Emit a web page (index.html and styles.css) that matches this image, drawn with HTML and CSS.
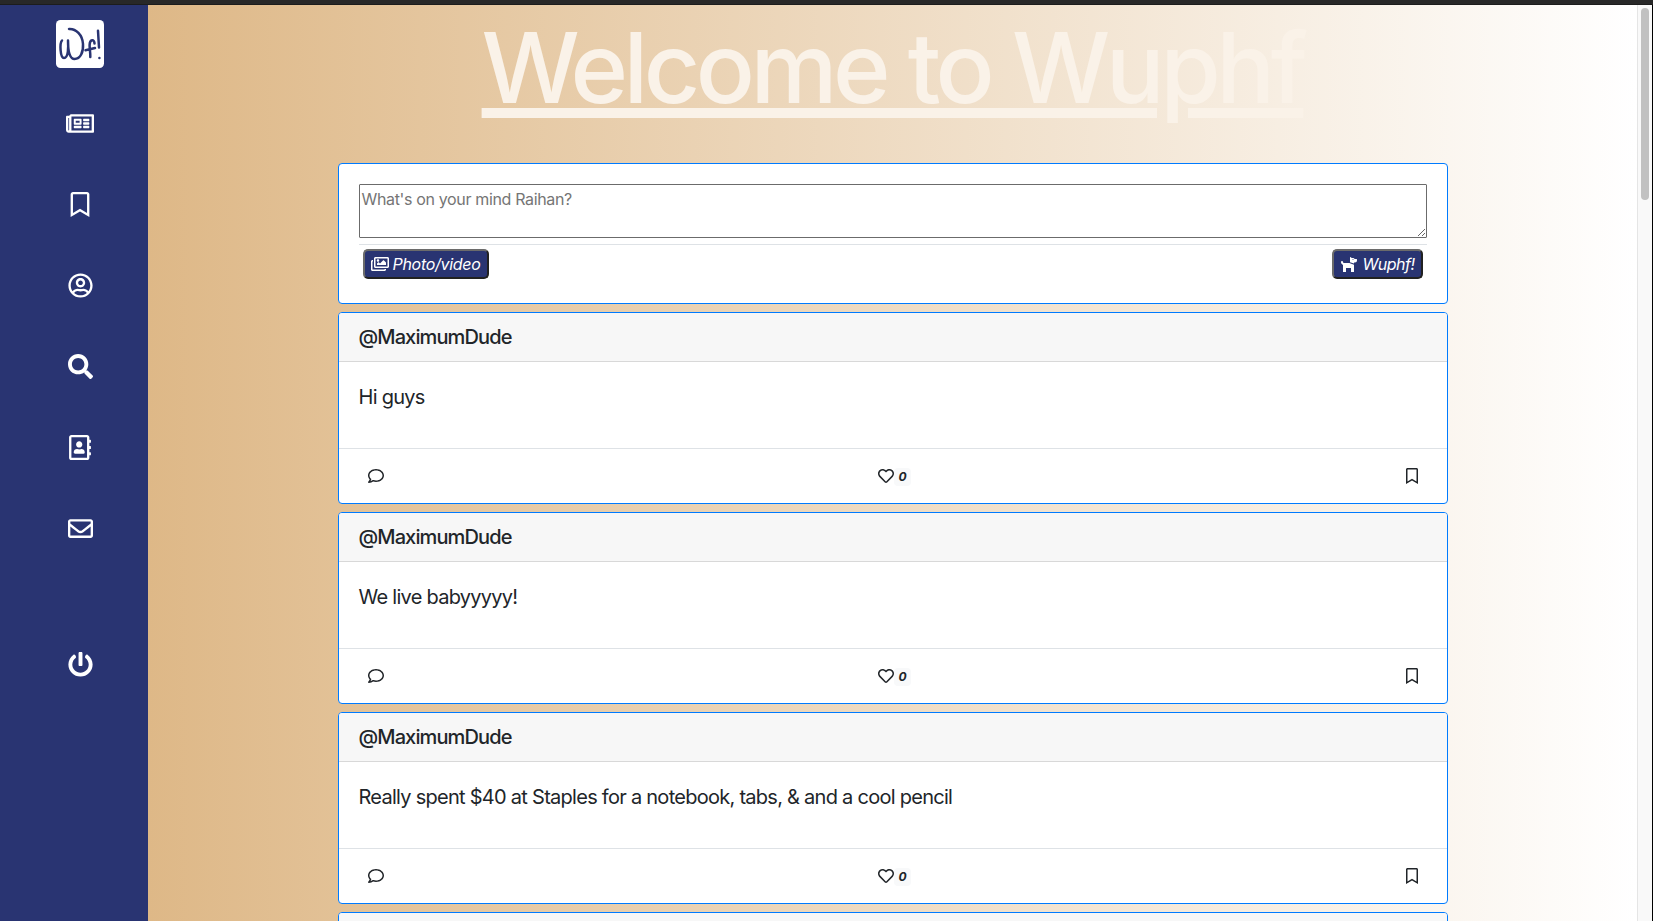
FILE: index.html
```html
<!DOCTYPE html>
<html lang="en">
<head>
<meta charset="utf-8">
<title>Wuphf</title>
<link rel="stylesheet" href="styles.css">
</head>
<body>
<svg class="sprite" aria-hidden="true">
  <symbol id="newspaper" viewBox="0 0 576 512"><path d="M552 64H112c-20.858 0-38.643 13.377-45.248 32H24c-13.255 0-24 10.745-24 24v272c0 30.928 25.072 56 56 56h496c13.255 0 24-10.745 24-24V88c0-13.255-10.745-24-24-24zM48 392V144h16v248c0 4.411-3.589 8-8 8s-8-3.589-8-8zm480 8H111.422c.374-2.614.578-5.283.578-8V112h416v288zM172 280h136c6.627 0 12-5.373 12-12v-96c0-6.627-5.373-12-12-12H172c-6.627 0-12 5.373-12 12v96c0 6.627 5.373 12 12 12zm28-80h80v40h-80v-40zm-40 140v-24c0-6.627 5.373-12 12-12h136c6.627 0 12 5.373 12 12v24c0 6.627-5.373 12-12 12H172c-6.627 0-12-5.373-12-12zm192 0v-24c0-6.627 5.373-12 12-12h104c6.627 0 12 5.373 12 12v24c0 6.627-5.373 12-12 12H364c-6.627 0-12-5.373-12-12zm0-144v-24c0-6.627 5.373-12 12-12h104c6.627 0 12 5.373 12 12v24c0 6.627-5.373 12-12 12H364c-6.627 0-12-5.373-12-12zm0 72v-24c0-6.627 5.373-12 12-12h104c6.627 0 12 5.373 12 12v24c0 6.627-5.373 12-12 12H364c-6.627 0-12-5.373-12-12z"/></symbol>
  <symbol id="bookmark" viewBox="0 0 384 512"><path d="M336 0H48C21.49 0 0 21.49 0 48v464l192-112 192 112V48c0-26.51-21.49-48-48-48zm0 428.43l-144-84-144 84V54a6 6 0 0 1 6-6h276c3.314 0 6 2.683 6 5.996V428.43z"/></symbol>
  <symbol id="user" viewBox="0 0 496 512"><path d="M248 104c-53 0-96 43-96 96s43 96 96 96 96-43 96-96-43-96-96-96zm0 144c-26.5 0-48-21.5-48-48s21.5-48 48-48 48 21.5 48 48-21.5 48-48 48zm0-240C111 8 0 119 0 256s111 248 248 248 248-111 248-248S385 8 248 8zm0 448c-49.7 0-95.1-18.3-130.1-48.4 14.9-23 40.4-38.6 69.6-39.5 20.8 6.4 40.6 9.6 60.5 9.6s39.7-3.1 60.5-9.6c29.2 1 54.7 16.5 69.6 39.5-35 30.1-80.4 48.4-130.1 48.4zm162.7-84.1c-24.4-31.4-62.1-51.9-105.1-51.9-10.2 0-26 9.600-57.600 9.600-31.500 0-47.400-9.600-57.600-9.600-42.900 0-80.600 20.500-105.100 51.900C61.900 339.200 48 299.200 48 256c0-110.300 89.700-200 200-200s200 89.700 200 200c0 43.200-13.900 83.200-37.300 115.900z"/></symbol>
  <symbol id="search" viewBox="0 0 512 512"><path d="M505 442.700L405.300 343c-4.500-4.500-10.600-7-17-7H372c27.600-35.300 44-79.700 44-128C416 93.100 322.900 0 208 0S0 93.100 0 208s93.100 208 208 208c48.300 0 92.700-16.400 128-44v16.300c0 6.400 2.500 12.500 7 17l99.700 99.700c9.400 9.400 24.600 9.400 33.900 0l28.300-28.300c9.400-9.400 9.400-24.600.1-34zM208 336c-70.700 0-128-57.200-128-128 0-70.700 57.200-128 128-128 70.700 0 128 57.200 128 128 0 70.700-57.200 128-128 128z"/></symbol>
  <symbol id="contacts" viewBox="0 0 448 512"><path d="M436 160c6.600 0 12-5.400 12-12v-40c0-6.600-5.400-12-12-12h-20V48c0-26.500-21.500-48-48-48H48C21.500 0 0 21.500 0 48v416c0 26.500 21.500 48 48 48h320c26.500 0 48-21.500 48-48v-48h20c6.600 0 12-5.400 12-12v-40c0-6.600-5.400-12-12-12h-20v-64h20c6.600 0 12-5.400 12-12v-40c0-6.600-5.400-12-12-12h-20v-64h20zm-68 304H48V48h320v416zM208 256c35.300 0 64-28.700 64-64s-28.700-64-64-64-64 28.700-64 64 28.700 64 64 64zm-89.600 128h179.200c12.400 0 22.400-8.600 22.400-19.200v-19.200c0-31.800-30.100-57.600-67.200-57.600-10.800 0-18.700 8-44.800 8-26.900 0-33.400-8-44.800-8-37.100 0-67.200 25.800-67.200 57.600v19.200c0 10.600 10 19.200 22.400 19.200z"/></symbol>
  <symbol id="envelope" viewBox="0 0 512 512"><path d="M464 64H48C21.490 64 0 85.490 0 112v288c0 26.510 21.490 48 48 48h416c26.510 0 48-21.490 48-48V112c0-26.510-21.490-48-48-48zm0 48v40.805c-22.422 18.259-58.168 46.651-134.587 106.490-16.841 13.247-50.201 45.072-73.413 44.701-23.208.375-56.579-31.459-73.413-44.701C106.180 199.465 70.425 171.067 48 152.805V112h416zM48 400V214.398c22.914 18.251 55.409 43.862 104.938 82.646 21.857 17.205 60.134 55.186 103.062 54.955 42.717.231 80.509-37.199 103.053-54.947 49.528-38.783 82.032-64.401 104.947-82.653V400H48z"/></symbol>
  <symbol id="power" viewBox="0 0 512 512"><path d="M400 54.100c63 45 104 118.600 104 201.900 0 136.800-110.800 247.700-247.500 248C120 504.300 8.200 393 8 256.400 7.900 173.100 48.900 99.300 111.800 54.200c11.700-8.300 28-4.800 35 7.700L162.600 90c5.900 10.500 3.100 23.800-6.600 31-41.500 30.800-68 79.600-68 134.900-.1 92.300 74.500 168.100 168 168.100 91.600 0 168.600-74.200 168-169.100-.3-51.800-24.700-101.800-68.100-134-9.700-7.200-12.400-20.500-6.500-30.900l15.800-28.100c7-12.400 23.200-16.100 34.800-7.800zM296 264V24c0-13.300-10.700-24-24-24h-32c-13.300 0-24 10.700-24 24v240c0 13.300 10.700 24 24 24h32c13.300 0 24-10.700 24-24z"/></symbol>
  <symbol id="images" viewBox="0 0 576 512"><path d="M480 416v16c0 26.510-21.490 48-48 48H48c-26.510 0-48-21.490-48-48V176c0-26.510 21.490-48 48-48h16v48H54a6 6 0 0 0-6 6v244a6 6 0 0 0 6 6h372a6 6 0 0 0 6-6v-10h48zm42-336H150a6 6 0 0 0-6 6v244a6 6 0 0 0 6 6h372a6 6 0 0 0 6-6V86a6 6 0 0 0-6-6zm6-48c26.510 0 48 21.490 48 48v256c0 26.510-21.490 48-48 48H144c-26.510 0-48-21.490-48-48V80c0-26.510 21.490-48 48-48h384zM264 144c0 22.091-17.909 40-40 40s-40-17.909-40-40 17.909-40 40-40 40 17.909 40 40zm-72 96l39.515-39.515c4.686-4.686 12.284-4.686 16.971 0L288 240l103.515-103.515c4.686-4.686 12.284-4.686 16.971 0L480 208v80H192v-48z"/></symbol>
  <symbol id="dog" viewBox="0 0 576 512"><path d="M298.060 224 448 277.550V496a16 16 0 0 1-16 16H368a16 16 0 0 1-16-16V384H192V496a16 16 0 0 1-16 16H112a16 16 0 0 1-16-16V282.090C58.840 268.840 32 233.660 32 192a32 32 0 0 1 64 0 32.060 32.060 0 0 0 32 32ZM544 112v32a64 64 0 0 1-64 64H448v35.580L320 197.870V48c0-14.250 17.220-21.390 27.310-11.310L374.590 64h53.630c10.910 0 23.750 7.920 28.620 17.690L464 96h64A16 16 0 0 1 544 112Zm-112 0a16 16 0 1 0-16 16A16 16 0 0 0 432 112Z"/></symbol>
  <symbol id="comment" viewBox="0 0 512 512"><path d="M256 32C114.600 32 0 125.100 0 240c0 47.600 19.900 91.200 52.900 126.300C38 405.700 7 439.100 6.500 439.500c-6.600 7-8.400 17.200-4.600 26S14.400 480 24 480c61.500 0 110-25.700 139.100-46.300C192 442.800 223.200 448 256 448c141.400 0 256-93.100 256-208S397.400 32 256 32zm0 368c-26.700 0-53.100-4.100-78.400-12.100l-22.700-7.200-19.500 13.800c-14.300 10.100-33.900 21.400-57.500 29 7.300-12.100 14.400-25.700 19.900-40.200l10.600-28.100-20.600-21.800C69.700 314.100 48 282.200 48 240c0-88.200 93.300-160 208-160s208 71.800 208 160-93.300 160-208 160z"/></symbol>
  <symbol id="heart" viewBox="0 0 512 512"><path d="M458.400 64.300C400.600 15.700 311.300 23 256 79.300 200.700 23 111.400 15.600 53.600 64.300-21.600 127.600-10.600 230.800 43 285.500l175.400 178.700c10 10.200 23.400 15.900 37.600 15.900 14.300 0 27.600-5.600 37.600-15.800L469 285.600c53.500-54.700 64.700-157.900-10.600-221.300zm-23.600 187.500L259.400 430.500c-2.400 2.400-4.400 2.400-6.800 0L77.200 251.800c-36.500-37.200-43.900-107.600 7.300-150.700 38.900-32.700 98.900-27.800 136.500 10.500l35 35.700 35-35.700c37.800-38.500 97.800-43.200 136.500-10.600 51.100 43.100 43.500 113.900 7.300 150.800z"/></symbol>
</svg>

<div class="topbar"></div>
<div class="app">
  <nav class="sidebar">
    <svg class="logo" viewBox="0 0 48 48">
      <rect width="48" height="48" rx="4.500"/>
      <path d="M6 20.500C3.600 23 4 38 8 38C12.500 38 12.500 27 12 20.500C12 30 13 39 18.500 39C24.500 39 27.500 32 27 24C26.500 15 20 8.500 13 9"/>
      <path d="M38.500 23.500C38.500 19 33.800 19 33.600 25C33.500 29 34.500 33 34.300 37M29.500 30.300L39 28"/>
      <path d="M42 10.800L43 27.500M43.400 37.900V38"/>
    </svg>
    <a class="nav-item"><svg><use href="#newspaper"/></svg></a>
    <a class="nav-item"><svg><use href="#bookmark"/></svg></a>
    <a class="nav-item nav-square"><svg><use href="#user"/></svg></a>
    <a class="nav-item nav-square"><svg><use href="#search"/></svg></a>
    <a class="nav-item"><svg><use href="#contacts"/></svg></a>
    <a class="nav-item nav-square"><svg><use href="#envelope"/></svg></a>
    <a class="nav-item nav-square nav-exit"><svg><use href="#power"/></svg></a>
  </nav>

  <main class="feed">
    <h1 class="title"><span>Welcome to Wuphf</span></h1>

    <section class="card composer">
      <textarea class="composer-input" placeholder="What's on your mind Raihan?"></textarea>
      <div class="composer-actions">
        <button class="btn"><svg><use href="#images"/></svg><i class="photo-label">Photo/video</i></button>
        <button class="btn btn-post"><svg><use href="#dog"/></svg><i class="post-label">Wuphf!</i></button>
      </div>
    </section>

    <article class="card post">
      <header class="post-author"><span>@MaximumDude</span></header>
      <p class="post-text">Hi guys</p>
      <footer class="post-actions">
        <svg><use href="#comment"/></svg>
        <span class="likes"><svg><use href="#heart"/></svg><i class="badge">0</i></span>
        <svg class="save"><use href="#bookmark"/></svg>
      </footer>
    </article>

    <article class="card post">
      <header class="post-author"><span>@MaximumDude</span></header>
      <p class="post-text">We live babyyyyy!</p>
      <footer class="post-actions">
        <svg><use href="#comment"/></svg>
        <span class="likes"><svg><use href="#heart"/></svg><i class="badge">0</i></span>
        <svg class="save"><use href="#bookmark"/></svg>
      </footer>
    </article>

    <article class="card post">
      <header class="post-author"><span>@MaximumDude</span></header>
      <p class="post-text">Really spent $40 at Staples for a notebook, tabs, &amp; and a cool pencil</p>
      <footer class="post-actions">
        <svg><use href="#comment"/></svg>
        <span class="likes"><svg><use href="#heart"/></svg><i class="badge">0</i></span>
        <svg class="save"><use href="#bookmark"/></svg>
      </footer>
    </article>

    <article class="card post">
      <header class="post-author"></header>
    </article>
  </main>

  <div class="scrollbar"><div class="thumb"></div></div>
</div>
</body>
</html>
```
FILE: styles.css
```css
* { box-sizing: border-box; }

body {
  margin: 0;
  height: 921px;
  overflow: hidden;
  font-family: Inter, "Liberation Sans", sans-serif;
  color: #212529;
  background: #fff;
}

.sprite { display: none; }

.topbar {
  height: 5px;
  background: #282828;
  border-bottom: 1px solid #1c1c1c;
}

.app {
  display: flex;
  height: 916px;
  border-right: 1px solid #000;
}

/* Sidebar */
.sidebar {
  flex: 0 0 148px;
  display: flex;
  flex-direction: column;
  align-items: center;
  padding: 15px 0 0 12px;
  background: #293472;
}

.logo {
  flex: none;
  width: 48px;
  height: 48px;
  margin-bottom: 15px;
  fill: none;
  stroke: #293472;
  stroke-width: 2.5;
  stroke-linecap: round;
  stroke-linejoin: round;
}

.logo rect { fill: #fff; stroke: none; }

.nav-item {
  flex: none;
  display: flex;
  align-items: center;
  justify-content: center;
  height: 81px;
  fill: #fff;
}

.nav-item svg { width: 28px; height: 25px; }
.nav-square svg { width: 25px; margin-left: 1px; }

.nav-exit { margin-top: 55px; }

/* Feed */
.feed {
  flex: 1;
  display: flex;
  flex-direction: column;
  align-items: center;
  gap: 8px;
  overflow: hidden;
  background: linear-gradient(to right, #deb887, #fff);
}

.title {
  flex: none;
  height: 150px;
  margin: 0;
  padding-top: 3px;
  font-size: 98px;
  font-weight: 500;
  line-height: 120px;
  letter-spacing: -4.5px;
  white-space: nowrap;
  color: #faf2e8;
}

.title span {
  text-decoration: underline;
  text-decoration-thickness: 10px;
  text-underline-offset: 5px;
}

.card {
  flex: none;
  width: 1110px;
  border: 1px solid #007bff;
  border-radius: 4px;
  background: #fff;
  overflow: hidden;
}

/* Composer */
.composer {
  height: 141px;
  padding: 20px;
}

.composer-input {
  display: block;
  width: 100%;
  height: 54px;
  margin: 0 0 6px;
  padding: 2px;
  border: 1px solid #6b6b6b;
  border-radius: 1px;
  font: 16px/24px Inter, "Liberation Sans", sans-serif;
  letter-spacing: -0.35px;
  resize: vertical;
}

.composer-input::placeholder { color: #757575; }

.composer-actions {
  display: flex;
  justify-content: space-between;
  padding: 4px 4px 0;
  border-top: 1px solid #dee2e6;
}

.btn {
  display: flex;
  align-items: center;
  gap: 4px;
  width: 126px;
  height: 30px;
  padding: 0 6px;
  border: 2px solid;
  border-color: #6b6b6b #212121 #212121 #6b6b6b;
  border-radius: 5px;
  background: #293472;
  color: #fff;
  font: 16px/24px Inter, "Liberation Sans", sans-serif;
  white-space: nowrap;
}

.btn svg { flex: none; width: 18px; height: 16px; fill: #fff; }

.btn-post { width: 91px; }

.photo-label { letter-spacing: -0.3px; }
.post-label { margin-left: 1px; letter-spacing: -0.5px; }

/* Posts */
.post { height: 192px; }

.post-author {
  height: 49px;
  padding: 0 20px;
  border-bottom: 1px solid #d8d8d8;
  background: #f7f7f7;
  font-size: 20px;
  font-weight: 500;
  line-height: 48px;
  letter-spacing: -0.88px;
}

.post-text {
  height: 86px;
  margin: 0;
  padding: 20px;
  font-size: 20px;
  line-height: 30px;
  letter-spacing: -0.73px;
}

.post-actions {
  display: flex;
  align-items: center;
  justify-content: space-between;
  height: 55px;
  padding: 0 29px;
  border-top: 1px solid #dee2e6;
  fill: #212529;
}

.post-actions svg { width: 16px; height: 16px; }
.post-actions .save { width: 12px; }

.likes { display: flex; align-items: center; }

.badge {
  width: 17px;
  height: 18px;
  margin-top: 2px;
  border-radius: 4px;
  background: #f8f9fa;
  font-size: 12px;
  font-weight: 700;
  line-height: 18px;
  text-align: center;
}

/* Scrollbar */
.scrollbar {
  flex: 0 0 15px;
  padding: 3px 3px 0;
  border-left: 1px solid #e5e5e5;
  background: #f9f9f9;
}

.thumb {
  width: 8px;
  height: 192px;
  border-radius: 4px;
  background: #c1c1c1;
}
```
